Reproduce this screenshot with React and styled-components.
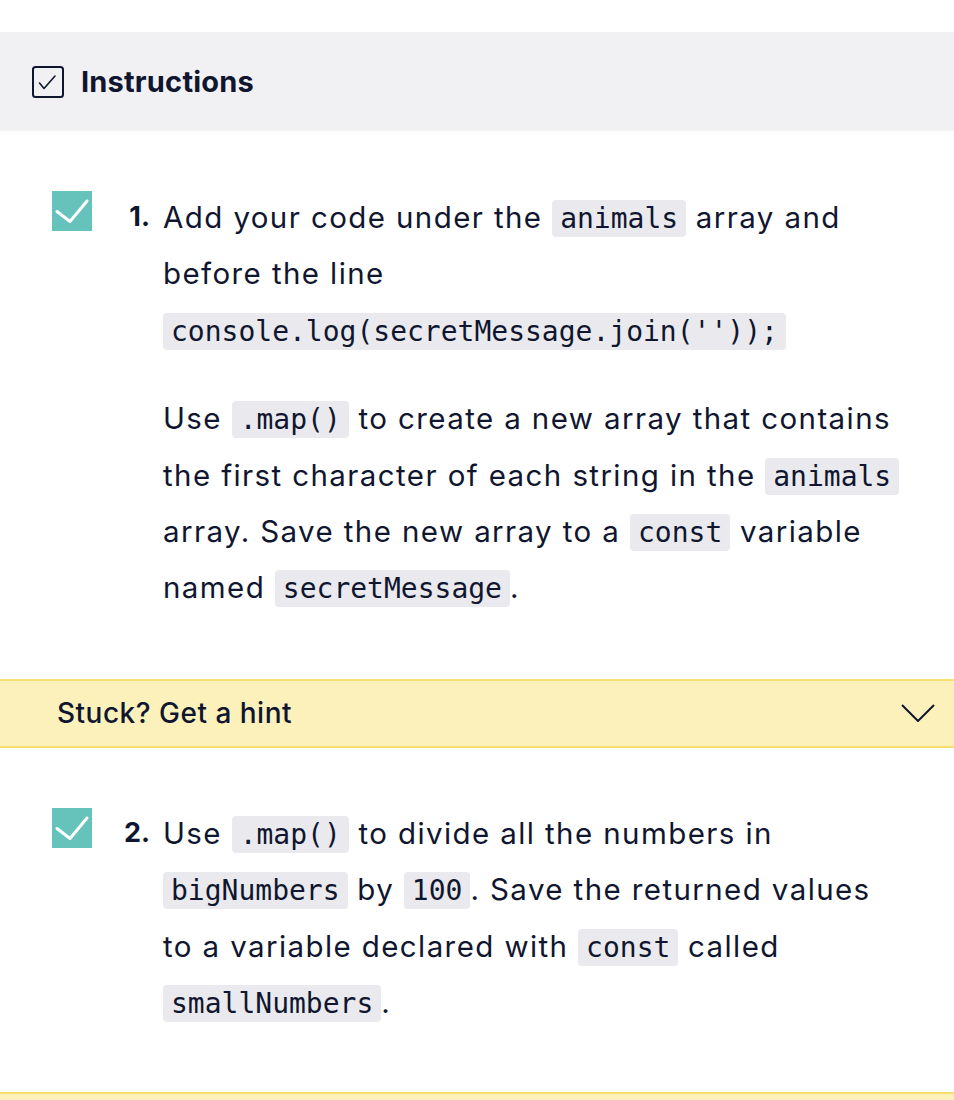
import React from "react";
import styled, { createGlobalStyle } from "styled-components";

const Global = createGlobalStyle`
  html, body { margin: 0; padding: 0; background: #fff; }
  body { font-family: Inter, "Noto Sans", sans-serif; color: #10162f; }
`;

const Page = styled.div`
  padding-top: 32px;
  width: 954px;
`;

const Header = styled.div`
  height: 99px;
  background: #f1f1f3;
  display: flex;
  align-items: center;
  padding-left: 32px;
  gap: 17px;
`;

const HeaderTitle = styled.h2`
  margin: 0;
  font-size: 29px;
  font-weight: 700;
  letter-spacing: 0.2px;
  color: #10162f;
`;

const Step = styled.div`
  display: grid;
  grid-template-columns: 40px 71px 1fr;
  align-items: start;
  padding: 60px 50px ${(p) => p.$bottom}px 52px;
`;

const Check = styled.div`
  width: 40px;
  height: 40px;
  background: #66c3bb;
  display: flex;
`;

const Num = styled.div`
  font-size: 27px;
  font-weight: 700;
  line-height: 56px;
  text-align: right;
  padding-right: 13px;
  margin-top: ${(p) => p.$shift}px;
`;

const Body = styled.div`
  margin-top: ${(p) => p.$shift}px;
`;

const P = styled.p`
  margin: 0;
  font-size: 29.5px;
  letter-spacing: 1.4px;
  line-height: 56.4px;
  & + & { margin-top: 32px; }
`;

const Code = styled.code`
  font-family: "DejaVu Sans Mono", monospace;
  font-size: 28px;
  line-height: 1;
  letter-spacing: 0;
  background: #eaeaee;
  border-radius: 4px;
  padding: 2px 8px;
`;

const Hint = styled.div`
  height: 65px;
  background: #fcf1bb;
  border-top: 2px solid #f8df70;
  border-bottom: 2px solid #f8df70;
  display: flex;
  align-items: center;
  justify-content: space-between;
  padding: 0 19px 0 57px;
  font-size: 28px;
  font-weight: 500;
  letter-spacing: 0.5px;
`;

const HintStub = styled.div`
  height: 8px;
  background: #fcf1bb;
  border-top: 2px solid #f8df70;
`;

const CheckMark = () => (
  <svg width="40" height="40" viewBox="0 0 40 40">
    <path d="M5 20.5 L18 30.5 L35 10" fill="none" stroke="#fff" strokeWidth="3" strokeLinecap="round" strokeLinejoin="round" />
  </svg>
);

const BoxIcon = () => (
  <svg width="32" height="32" viewBox="0 0 32 32">
    <rect x="1" y="1" width="30" height="30" rx="2.5" fill="none" stroke="#10162f" strokeWidth="2" />
    <path d="M7.5 17 L12 22.5 L23 10" fill="none" stroke="#10162f" strokeWidth="1.6" strokeLinecap="round" strokeLinejoin="round" />
  </svg>
);

const Chevron = () => (
  <svg width="34" height="18" viewBox="0 0 34 18">
    <path d="M1 1 L17 17 L33 1" fill="none" stroke="#10162f" strokeWidth="2" />
  </svg>
);

export default function App() {
  return (
    <Page>
      <Global />
      <Header>
        <BoxIcon />
        <HeaderTitle>Instructions</HeaderTitle>
      </Header>
      <Step $bottom={63}>
        <Check><CheckMark /></Check>
        <Num $shift={-2}>1.</Num>
        <Body $shift={-2}>
          <P>
            Add your code under the <Code>animals</Code> array and before the line{" "}
            <Code>console.log(secretMessage.join(''));</Code>
          </P>
          <P>
            Use <Code>.map()</Code> to create a new array that contains the first character of each string in the{" "}
            <Code>animals</Code> array. Save the new array to a <Code>const</Code> variable named{" "}
            <Code>secretMessage</Code>.
          </P>
        </Body>
      </Step>
      <Hint>
        <span>Stuck? Get a hint</span>
        <Chevron />
      </Hint>
      <Step $bottom={62}>
        <Check><CheckMark /></Check>
        <Num $shift={-3}>2.</Num>
        <Body $shift={-3}>
          <P>
            Use <Code>.map()</Code> to divide all the numbers in <Code>bigNumbers</Code> by <Code>100</Code>. Save the
            returned values to a variable declared with <Code>const</Code> called <Code>smallNumbers</Code>.
          </P>
        </Body>
      </Step>
      <HintStub />
    </Page>
  );
}
